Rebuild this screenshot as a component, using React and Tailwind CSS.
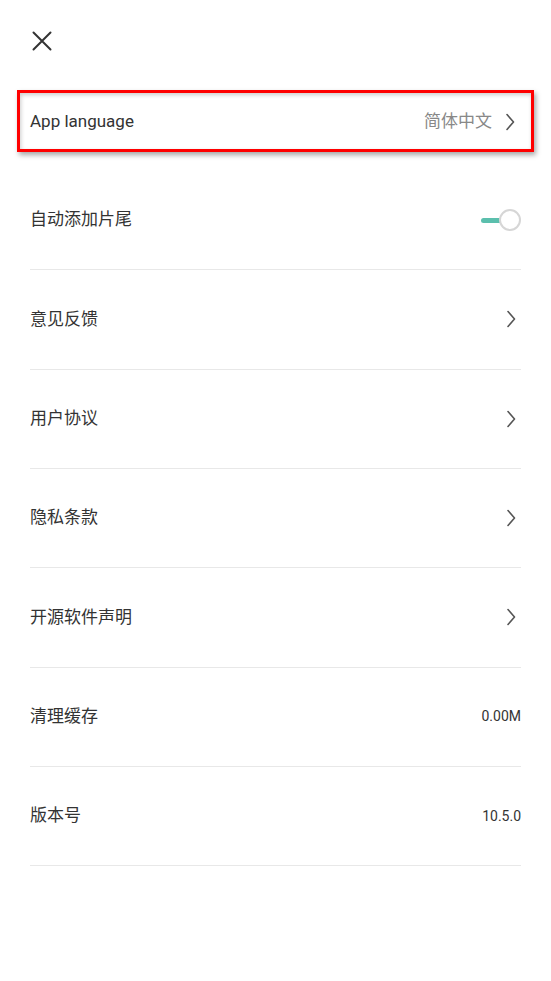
import React from "react";

const Chevron = ({ className = "" }) => (
  <svg width="10" height="18" viewBox="0 0 10 18" className={className} fill="none">
    <path d="M2 1.5 L8.5 9 L2 16.5" stroke="#555" strokeWidth="1.6" strokeLinecap="round" strokeLinejoin="round" />
  </svg>
);

const Toggle = () => (
  <div className="relative w-[40px] h-[22px]">
    <div className="absolute left-0 top-[9px] w-[22px] h-[5px] rounded-full bg-[#5bbfad]" />
    <div className="absolute right-0 top-0 w-[22px] h-[22px] rounded-full bg-white border-2 border-[#d6d6d6]" />
  </div>
);

const rows = [
  { label: "自动添加片尾", right: "toggle" },
  { label: "意见反馈", right: "chevron" },
  { label: "用户协议", right: "chevron" },
  { label: "隐私条款", right: "chevron" },
  { label: "开源软件声明", right: "chevron" },
  { label: "清理缓存", right: "0.00M" },
  { label: "版本号", right: "10.5.0" },
];

export default function App() {
  return (
    <div
      className="w-[551px] h-[981px] bg-white text-[#333]"
      style={{ fontFamily: 'Roboto, "Noto Sans CJK SC", sans-serif' }}
    >
      <div className="pt-[31px] pl-[32px]">
        <svg width="20" height="20" viewBox="0 0 20 20" fill="none">
          <path d="M1.5 1.5 L18.5 18.5 M18.5 1.5 L1.5 18.5" stroke="#333" strokeWidth="2" strokeLinecap="round" />
        </svg>
      </div>

      <div className="mt-[39px] mx-[17px] h-[62px] border-[3px] border-[#ff0000] shadow-[2px_3px_5px_rgba(0,0,0,0.35),inset_1px_2px_4px_rgba(0,0,0,0.2)] flex items-center justify-between pl-[10px] pr-[16px] pt-[2px]">
        <span className="text-[17px]">App language</span>
        <div className="flex items-center gap-[13px]">
          <span className="text-[17px] text-[#888]">简体中文</span>
          <Chevron />
        </div>
      </div>

      <div className="mt-[19px] mx-[30px]">
        {rows.map((row) => (
          <div
            key={row.label}
            className="h-[99.33px] border-b border-[#e8e8e8] flex items-center justify-between"
          >
            <span className="text-[17px]">{row.label}</span>
            {row.right === "toggle" && <Toggle />}
            {row.right === "chevron" && <Chevron className="mr-[5px]" />}
            {row.right !== "toggle" && row.right !== "chevron" && (
              <span className="text-[14px]">{row.right}</span>
            )}
          </div>
        ))}
      </div>
    </div>
  );
}
